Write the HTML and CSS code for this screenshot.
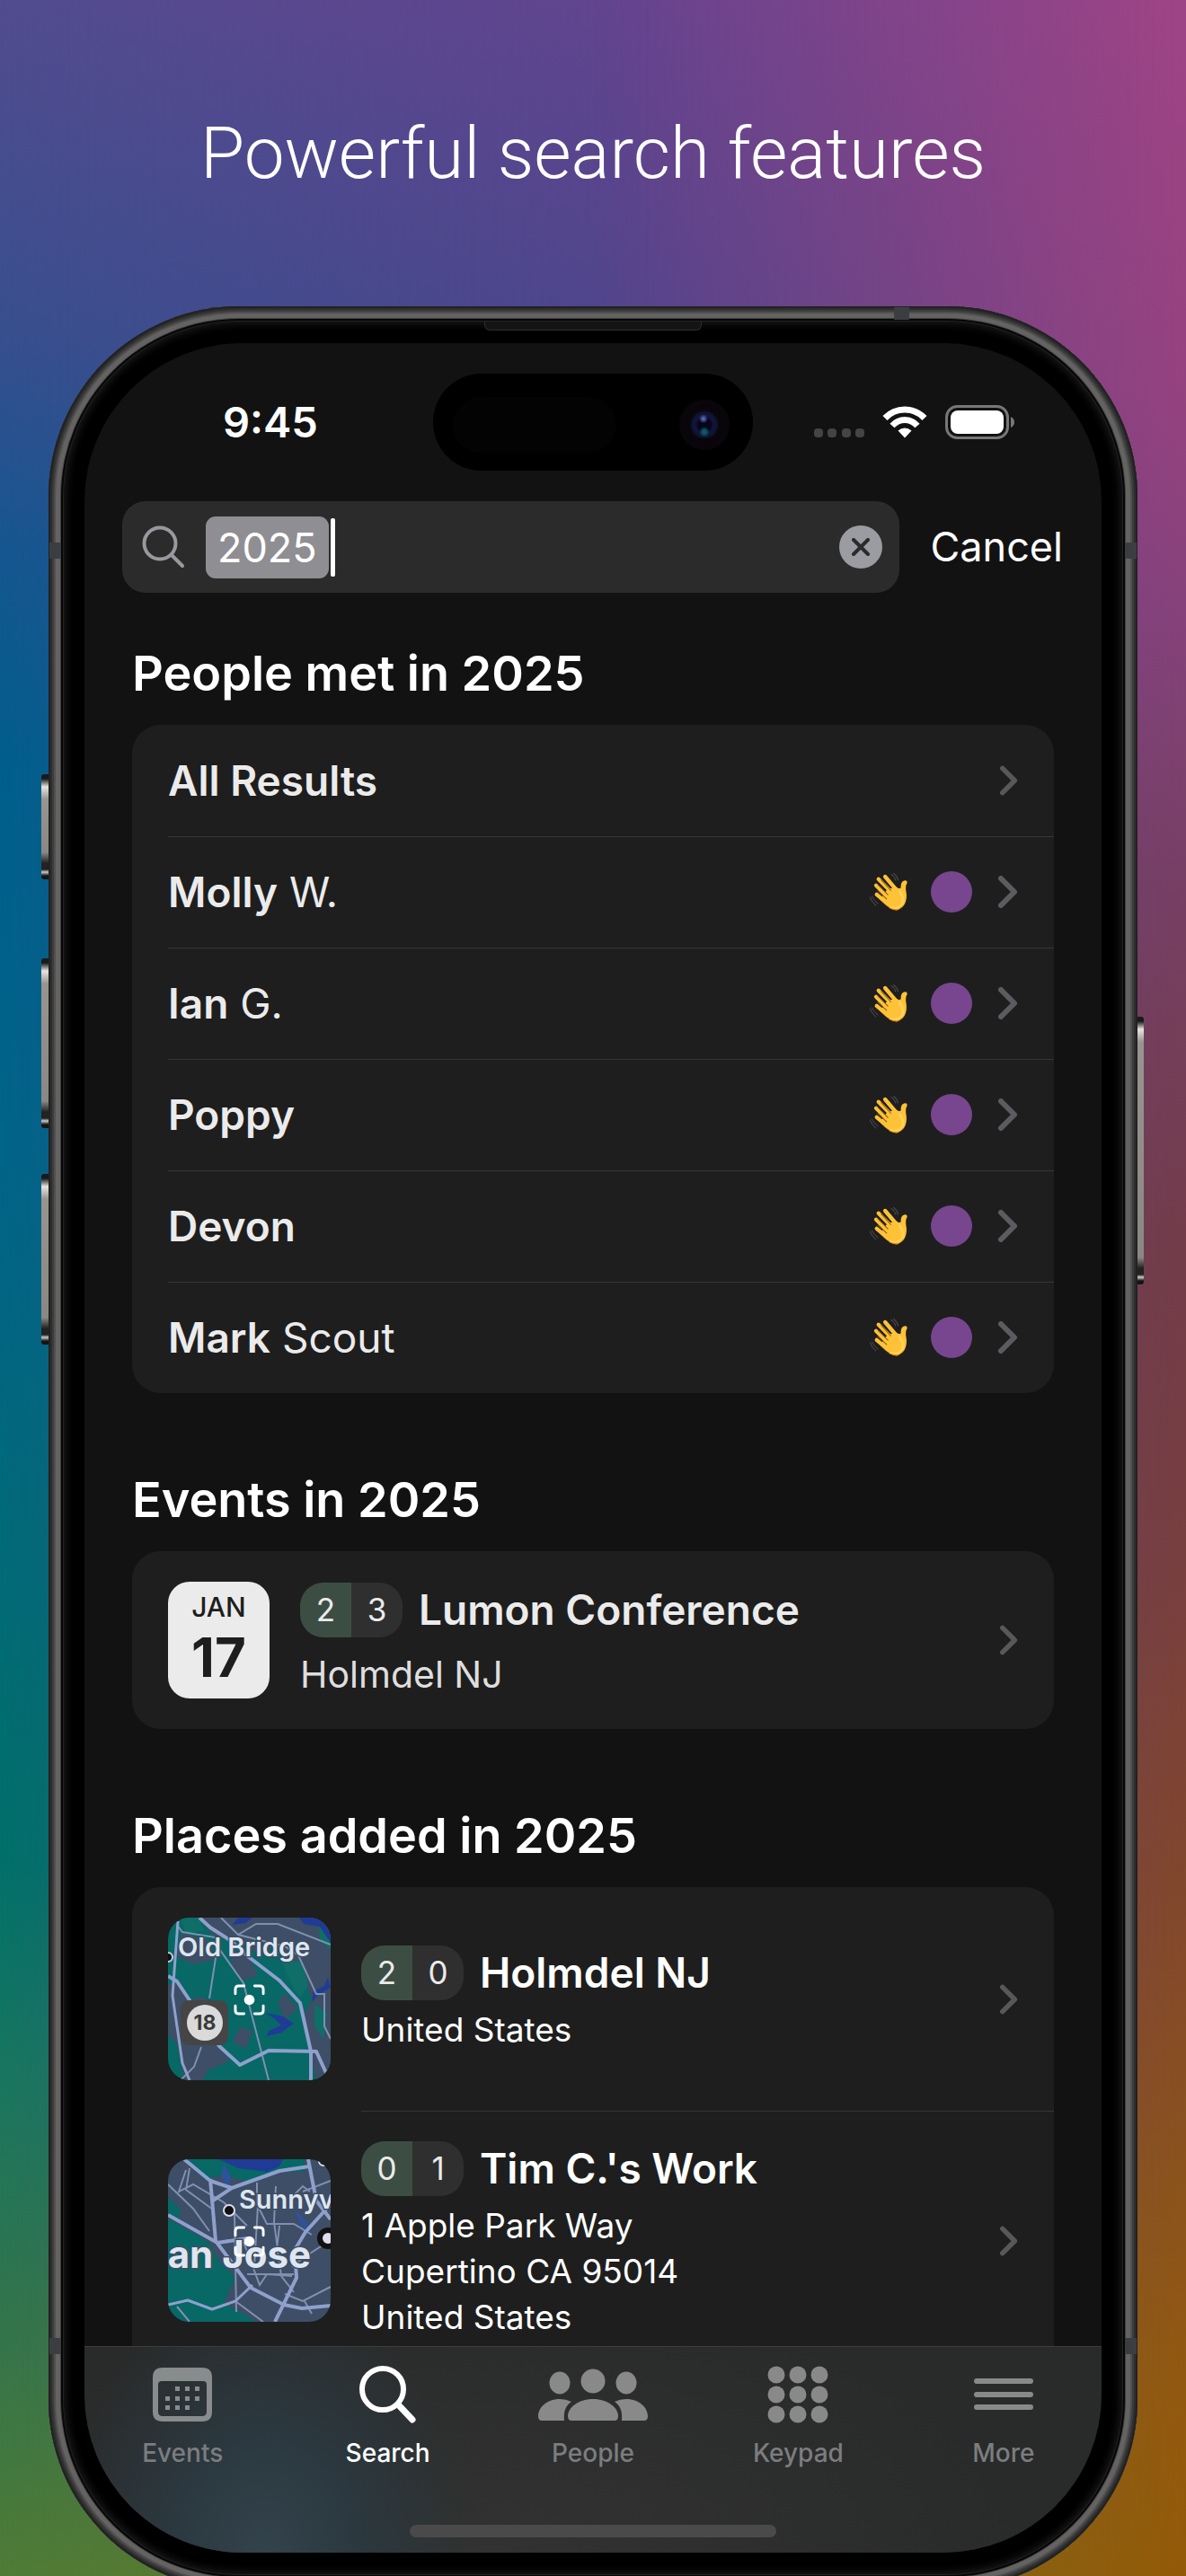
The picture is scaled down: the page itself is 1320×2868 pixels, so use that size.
FILE: index.html
```html
<!DOCTYPE html>
<html lang="en">
<head>
<meta charset="utf-8">
<meta name="viewport" content="width=device-width, initial-scale=1">
<title>Powerful search features</title>
<link rel="stylesheet" href="styles.css">
</head>
<body>
<svg class="sprite" aria-hidden="true">
  <symbol id="chevron" viewBox="0 0 22 36"><path d="M3 3l15 15L3 33" fill="none" stroke="currentColor" stroke-width="6" stroke-linecap="round" stroke-linejoin="round"/></symbol>
  <symbol id="wave" viewBox="0 0 125 125">
    <g fill="none" stroke="#4c4c4e" stroke-width="3" stroke-linecap="round">
      <path d="M71 4q12 8 15 20M79 1q12 9 15 23M1 80q6 16 19 27M7 77q6 13 20 24"/>
    </g>
    <path d="M58 54L88 46Q98 54 103 48Q102 28 114 25Q125 23 124 32Q118 42 120 58Q126 88 113 107Q95 130 68 116Q50 105 34 88Z" fill="#fdc237"/>
    <g fill="none" stroke="#fdc237" stroke-width="13" stroke-linecap="round">
      <path d="M51 12L90 58M29 20L78 70M21 41L68 88M23 71L62 104"/>
    </g>
    <path d="M100 62q18 26 4 46q-12 14-34 6" fill="none" stroke="#ffd765" stroke-width="9" stroke-linecap="round" opacity=".7"/>
    <g fill="none" stroke="#8a5a10" stroke-width="3" stroke-linecap="round"><path d="M38 23L70 58M26 38L60 72M27 59L56 86"/></g>
    <path d="M38 92Q66 122 92 120Q112 112 119 90Q110 117 90 124Q64 122 38 92Z" fill="#e08a10"/>
  </symbol>
  <symbol id="focus" viewBox="0 0 36 36">
    <path d="M2 11V6q0-4 4-4h6M24 2h6q4 0 4 4v5M34 25v5q0 4-4 4h-6M12 34H6q-4 0-4-4v-5" fill="none" stroke="#fff" stroke-width="3" stroke-linecap="round"/>
    <circle cx="18" cy="18" r="6" fill="#fff"/>
  </symbol>
</svg>

<main class="page">
  <h1 class="headline">Powerful search features</h1>

  <div class="phone">
    <span class="side-button action"></span>
    <span class="side-button volume-up"></span>
    <span class="side-button volume-down"></span>
    <span class="side-button power"></span>
    <span class="band band-top"></span>
    <span class="band band-left"></span>
    <span class="band band-right"></span>
    <span class="band band-left low"></span>
    <span class="band band-right low"></span>
    <span class="earpiece"></span>

    <div class="screen">
      <header class="status">
        <time class="clock">9:45</time>
        <div class="island"><span class="sensor"></span><span class="lens"></span></div>
        <div class="indicators">
          <svg width="56" height="36" viewBox="0 0 56 36" fill="#444"><rect y="25" width="10" height="10" rx="4"/><rect x="15" y="25" width="10" height="10" rx="4"/><rect x="31" y="25" width="10" height="10" rx="4"/><rect x="46" y="25" width="10" height="10" rx="4"/></svg>
          <svg class="wifi" width="50" height="36" viewBox="0 0 50 36" fill="none" stroke="#fff" stroke-width="7"><path d="M3 13.500Q12 4 25 4T47 13.500"/><path d="M11 22Q17 15.500 25 15.500T39 22"/><path d="M25 35.500l-7.500-8Q21 24.500 25 24.500T32.500 27.500Z" fill="#fff" stroke="none"/></svg>
          <svg width="78" height="38" viewBox="0 0 78 38"><rect x="1.500" y="1.500" width="68" height="35" rx="12" fill="none" stroke="#77777a" stroke-width="3"/><rect x="6" y="6" width="59" height="26" rx="8" fill="#fff"/><path d="M73 13q4 2 4 6t-4 6z" fill="#77777a"/></svg>
        </div>
      </header>

      <form class="search-row" role="search" onsubmit="return false">
        <div class="search-box">
          <svg class="glass" width="48" height="48" viewBox="0 0 48 48" fill="none" stroke="#98989f" stroke-width="4" stroke-linecap="round"><circle cx="20" cy="20" r="17.500"/><path d="M33 33l12 12"/></svg>
          <input class="query" type="text" aria-label="Search" value="2025">
          <span class="caret"></span>
          <button class="clear" type="reset" aria-label="Clear text">
            <svg width="20" height="20" viewBox="0 0 20 20" stroke="#2b2b2b" stroke-width="4" stroke-linecap="round"><path d="M2 2l16 16M18 2L2 18"/></svg>
          </button>
        </div>
        <button class="cancel" type="button">Cancel</button>
      </form>

      <section class="group first">
        <h2>People met in 2025</h2>
        <ul class="card people">
          <li><a class="person" href="#all"><strong>All Results</strong><svg class="chevron small"><use href="#chevron"/></svg></a></li>
          <li><a class="person" href="#molly"><span><strong>Molly</strong> W.</span><svg class="wave"><use href="#wave"/></svg><i class="dot"></i><svg class="chevron"><use href="#chevron"/></svg></a></li>
          <li><a class="person" href="#ian"><span><strong>Ian</strong> G.</span><svg class="wave"><use href="#wave"/></svg><i class="dot"></i><svg class="chevron"><use href="#chevron"/></svg></a></li>
          <li><a class="person" href="#poppy"><span><strong>Poppy</strong></span><svg class="wave"><use href="#wave"/></svg><i class="dot"></i><svg class="chevron"><use href="#chevron"/></svg></a></li>
          <li><a class="person" href="#devon"><span><strong>Devon</strong></span><svg class="wave"><use href="#wave"/></svg><i class="dot"></i><svg class="chevron"><use href="#chevron"/></svg></a></li>
          <li><a class="person" href="#mark"><span><strong>Mark</strong> Scout</span><svg class="wave"><use href="#wave"/></svg><i class="dot"></i><svg class="chevron"><use href="#chevron"/></svg></a></li>
        </ul>
      </section>

      <section class="group">
        <h2>Events in 2025</h2>
        <div class="card">
          <a class="entry event" href="#lumon">
            <time class="date" datetime="2025-01-17"><span class="month">JAN</span><span class="day">17</span></time>
            <div class="details">
              <h3><span class="counts"><b>2</b><b>3</b></span>Lumon Conference</h3>
              <p>Holmdel NJ</p>
            </div>
            <svg class="chevron small"><use href="#chevron"/></svg>
          </a>
        </div>
      </section>

      <section class="group places">
        <h2>Places added in 2025</h2>
        <ul class="card">
          <li><a class="entry" href="#holmdel">
            <svg class="map" viewBox="0 0 181 181">
              <rect width="181" height="181" fill="#076866"/>
              <g fill="#3d4e66">
                <path d="M35 0H181V181H165L150 110L160 92L150 60L138 42L120 32L100 40L75 24L50 20L40 8Z"/>
                <path d="M0 75L12 72L22 92L40 88L55 108L45 130L62 148L68 160L45 170L38 181H18L10 140L0 130Z"/>
                <path d="M8 42l20 10l25-5l-8-22l-30-8zM72 40l18 4l10 20l-16 6l-14-14zM80 122l14 4l-8 20l-14-8zM130 84l14 18l-14 12l-8-20z"/>
              </g>
              <path d="M168 10l13 8v18l-12-10zM125 46l25 4l6 26l-10 14l-14-28zM163 96l14 10l-4 30l-10-16zM14 0h20l6 14l-20 4z" fill="#0f6e68"/>
              <g fill="#1f3b96">
                <path d="M78 0h16l-8 6l-14 2zM146 0h20l15 14v14l-12-18l-18-3zM178 66l3 12l-14 8l-7 8l2-12l12-6z"/>
                <path d="M108 106l20 4l12 8l-6 4l-8 6l-16 4l2-6l14-6l-8-8z"/>
              </g>
              <g fill="none" stroke="#7f90b0" stroke-width="2">
                <path d="M59 0L78 19L98 7H122L181 30M10 8L16 16L53 22V45L46 90M55 32L84 73L112 181M145 42L165 85H174V121L181 135M37 144L29 166L14 181M78 19L130 32L145 42"/>
              </g>
              <g fill="none" stroke="#8fa0cc" stroke-width="4" stroke-linejoin="round">
                <path d="M35 0L47 11L69 25L90 44L124 70L147 95L159 149V181"/>
                <path d="M0 65L10 71L24 92L57 143L80 164L112 148L165 149L176 173"/>
                <path d="M11 4L5 87L16 162L24 181" stroke-width="3"/>
              </g>
              <circle cx="0" cy="44" r="5" fill="#111" stroke="#ccd" stroke-width="2"/>
              <text class="town" x="11" y="43">Old Bridge</text>
              <rect x="14" y="92" width="53" height="50" rx="9" fill="#454545"/>
              <circle cx="41" cy="117" r="20" fill="#dadada"/>
              <text class="route" x="41" y="125">18</text>
              <use href="#focus" x="73" y="74" width="35" height="35"/>
            </svg>
            <div class="details">
              <h3><span class="counts"><b>2</b><b>0</b></span>Holmdel NJ</h3>
              <p>United States</p>
            </div>
            <svg class="chevron small"><use href="#chevron"/></svg>
          </a></li>
          <li><a class="entry" href="#tim">
            <svg class="map" viewBox="0 0 181 181">
              <rect width="181" height="181" fill="#3d4e66"/>
              <path d="M18 0H152V14L124 14L95 26L60 18L40 22ZM0 42L14 56L12 66L0 60ZM0 66L45 92L58 115L75 132L62 160L80 170L98 181H0Z" fill="#076866"/>
              <path d="M56 0h72l-4 8l-14 6l-14-2l-18-2l-8-4z" fill="#1f3b96"/>
              <path d="M62 4l8 16l-3 14l-8-16zM140 56l14 12l6 16l-12-10z" fill="#2f5298"/>
              <g fill="none" stroke="#7f90b0" stroke-width="2">
                <path d="M0 28L28 55L46 80M20 12L12 36L28 28L62 48L88 74M24 10L20 34L50 56M99 26V50L110 72H140L160 84M120 30L118 70L126 130L140 148M100 52L96 120M74 60L76 170M88 128H140M84 92L102 140L110 128L138 130M124 74L120 110M138 120L150 110L181 90M130 150L150 158L181 142M152 158L160 172M10 164L24 181M75 158L106 181M150 36L181 24M140 40L150 30L158 36"/>
              </g>
              <g fill="none" stroke="#8fa0cc" stroke-width="4" stroke-linejoin="round">
                <path d="M18 0L47 24L71 32L124 13L157 8M156 0L165 46L181 67M47 22L53 91L92 143L129 162L149 166L181 163"/>
                <path d="M0 62L55 93L88 88M181 50L153 81L141 101L143 132L119 181M71 32L50 46"/>
                <path d="M0 162L22 157L49 167L75 158L94 140" stroke-width="3"/>
              </g>
              <circle cx="68" cy="57" r="6" fill="#111" stroke="#dde" stroke-width="2"/>
              <circle cx="178" cy="88" r="9" fill="#dde" stroke="#111" stroke-width="6"/>
              <circle cx="173" cy="2" r="5" fill="#111" stroke="#dde" stroke-width="2"/>
              <text class="town" x="79" y="55">Sunnyv</text>
              <text class="city" x="159" y="121">an Jose</text>
              <use href="#focus" x="73" y="74" width="35" height="35"/>
            </svg>
            <div class="details">
              <h3><span class="counts"><b>0</b><b>1</b></span>Tim C.'s Work</h3>
              <p>1 Apple Park Way<br>Cupertino CA 95014<br>United States</p>
            </div>
            <svg class="chevron small"><use href="#chevron"/></svg>
          </a></li>
        </ul>
      </section>

      <footer class="dock">
        <nav class="tabs">
          <a href="#events">
            <svg width="66" height="66" viewBox="0 0 66 66" fill="#898c8c"><path fill-rule="evenodd" d="M11 3h44q11 0 11 11v38q0 11-11 11H11Q0 63 0 52V14Q0 3 11 3zM10 18q-4 0-4 4v30q0 5 5 5h44q5 0 5-5V22q0-4-4-4z"/><path d="M25 24h5v5h-5zM36 24h5v5h-5zM47 24h5v5h-5zM14 35h5v5h-5zM25 35h5v5h-5zM36 35h5v5h-5zM47 35h5v5h-5zM14 45h5v5h-5zM25 45h5v5h-5zM36 45h5v5h-5z"/></svg>
            Events</a>
          <a class="current" href="#search" aria-current="page">
            <svg width="66" height="66" viewBox="0 0 66 66" fill="none" stroke="#fff" stroke-width="6"><circle cx="27" cy="27" r="23"/><path d="M44 44l16 17" stroke-width="7" stroke-linecap="round"/></svg>
            Search</a>
          <a href="#people">
            <svg width="122" height="66" viewBox="0 0 122 66" fill="#898989"><circle cx="61" cy="18" r="13.500"/><ellipse cx="24" cy="20" rx="11.500" ry="12.500"/><ellipse cx="98" cy="20" rx="11.500" ry="12.500"/><path d="M37 62q-4 0-4-5c0-9 11-19 28-19s28 10 28 19q0 5-4 5z"/><path d="M4 62q-4 0-4-5C0 48 9 38 24 38q7 0 13 3c-6 4-9 10-8 21zM118 62q4 0 4-5c0-9-9-19-24-19q-7 0-13 3c6 4 9 10 8 21z"/></svg>
            People</a>
          <a href="#keypad">
            <svg width="68" height="66" viewBox="0 0 68 66" fill="#898989"><circle cx="10" cy="11" r="9.500"/><circle cx="34" cy="11" r="9.500"/><circle cx="58" cy="11" r="9.500"/><circle cx="10" cy="33" r="9.500"/><circle cx="34" cy="33" r="9.500"/><circle cx="58" cy="33" r="9.500"/><circle cx="10" cy="55" r="9.500"/><circle cx="34" cy="55" r="9.500"/><circle cx="58" cy="55" r="9.500"/></svg>
            Keypad</a>
          <a href="#more">
            <svg width="66" height="66" viewBox="0 0 66 66" fill="#898989"><rect y="15" width="66" height="6" rx="3"/><rect y="30" width="66" height="6" rx="3"/><rect y="44" width="66" height="6" rx="3"/></svg>
            More</a>
        </nav>
        <div class="home-indicator"></div>
      </footer>
    </div>
  </div>
</main>
</body>
</html>
```
FILE: styles.css
```css
* { box-sizing: border-box; }

body {
  margin: 0;
  font-family: Inter, "Liberation Sans", sans-serif;
  color: #ebebeb;
  background: #111;
}

h1, h2, h3, p, ul { margin: 0; padding: 0; }
ul { list-style: none; }
a { color: inherit; text-decoration: none; }
svg { display: block; flex: none; }
button, input { font: inherit; color: inherit; border: 0; background: none; padding: 0; margin: 0; }

.sprite { display: none; }

/* Backdrop: three vertical colour ramps blended from left to right */
.page {
  position: relative;
  z-index: 0;
  min-height: 100vh;
  overflow: hidden;
  background: linear-gradient(#524c90 0%, #384f8e 13%, #165690 21%, #005f8c 30%, #006488 45%, #00697a 58%, #00706a 72%, #177660 80%, #35754a 91%, #4f7c36 100%);
}
.page::before, .page::after { content: ""; position: absolute; inset: 0; z-index: -1; }
.page::before {
  background: linear-gradient(#63448f, #50458c 13%, #50458c 80%, #6e7426 100%);
  mask-image: linear-gradient(90deg, transparent, #000 55%);
}
.page::after {
  background: linear-gradient(#9e4486 0%, #96427f 15%, #86427a 24%, #763f62 35%, #743c48 49%, #783f3e 61%, #82472c 73%, #8c521c 84%, #93590e 94%, #935a08 100%);
  mask-image: linear-gradient(90deg, transparent 50%, #000 100%);
}

.headline {
  padding: 121px 0 120px;
  font-family: Roboto, "Liberation Sans", sans-serif;
  font-size: 80px;
  line-height: 100px;
  font-weight: 300;
  text-align: center;
  color: #fff;
}

/* Handset */
.phone {
  position: relative;
  margin: 0 54px -15px;
  padding: 41px 40px;
  border-radius: 212px;
  background: #000;
  box-shadow:
    inset 0 0 0 2px #222,
    inset 0 0 0 4px #2e2e2e,
    inset 0 0 0 6px #3c3c3c,
    inset 0 0 0 8px #505050,
    inset 0 0 0 13px #646362,
    inset 0 0 0 14px #404040,
    inset 0 0 0 16px #060606,
    inset 0 0 0 17px #222,
    inset 0 0 8px 20px #181818;
}
.side-button {
  position: absolute;
  left: -8px;
  width: 8px;
  border-radius: 3px 0 0 3px;
  background: linear-gradient(#1a1a1a 0 5px, #e8e4e0 14px, #98948f 28px, #8a8884 calc(100% - 30px), #222 calc(100% - 18px), #222 calc(100% - 11px), #ccc calc(100% - 8px), #151515 calc(100% - 4px));
}
.action { top: 521px; height: 117px; }
.volume-up { top: 726px; height: 189px; }
.volume-down { top: 966px; height: 190px; }
.power { top: 791px; left: auto; right: -7px; width: 7px; height: 298px; border-radius: 0 3px 3px 0; }
.band { position: absolute; width: 13px; height: 18px; background: #3b3e41; }
.band-top { top: 1px; right: 254px; width: 17px; height: 14px; }
.band-left { top: 263px; left: 1px; }
.band-right { top: 263px; right: 1px; }
.band.low { top: auto; bottom: 262px; }
.earpiece {
  position: absolute;
  top: 17px;
  left: 50%;
  width: 242px;
  height: 10px;
  transform: translateX(-50%);
  border: solid #2c2c2c;
  border-width: 0 1px 1px;
  border-radius: 0 0 6px 6px;
  background: #141414;
}

.screen {
  position: relative;
  overflow: hidden;
  border-radius: 176px;
  background: #121212;
}

/* Status bar */
.status {
  display: grid;
  grid-template-columns: 1fr 356px 1fr;
  align-items: center;
  padding: 34px 0;
}
.clock { padding-left: 154px; font-size: 47px; line-height: 56px; font-weight: 600; color: #fff; }
.island {
  display: flex;
  align-items: center;
  justify-content: space-between;
  height: 108px;
  padding: 6px 26px 0 22px;
  border-radius: 54px;
  background: #000;
}
.sensor { width: 182px; height: 62px; border-radius: 31px; background: #030303; }
.lens {
  width: 56px;
  height: 56px;
  border-radius: 50%;
  background:
    radial-gradient(circle at 48% 38%, #5565b8 0 1px, transparent 5px),
    radial-gradient(circle at 50% 64%, #0d5a62 0 2px, transparent 6px),
    radial-gradient(circle, #05051c 0 7px, #12143c 10px, #101230 14px, #07060a 16px, #0a050a 27px);
}
.indicators { display: flex; align-items: center; justify-content: flex-end; gap: 20px; padding-right: 96px; }

/* Search field */
.search-row { display: flex; align-items: center; gap: 34px; padding: 0 43px 0 42px; }
.search-box {
  display: flex;
  flex: 1;
  align-items: center;
  min-width: 0;
  height: 102px;
  padding: 0 19px 0 22px;
  border-radius: 26px;
  background: #2b2b2b;
}
.query {
  field-sizing: content;
  height: 69px;
  margin-left: 23px;
  padding: 0 13px;
  border-radius: 11px;
  background: #8f8e93;
  color: #fff;
  font-size: 45px;
}
.caret { width: 5px; height: 65px; margin-left: 2px; border-radius: 2px; background: #fff; }
.clear {
  display: grid;
  place-items: center;
  width: 48px;
  height: 48px;
  margin-left: auto;
  border-radius: 50%;
  background: #9b9ba2;
}
.cancel { font-size: 45px; line-height: 56px; color: #fff; }

/* Result groups */
.group { padding: 87px 53px 0; }
.group.first { padding-top: 58px; }
.group h2 { padding-bottom: 25px; font-size: 54px; line-height: 64px; font-weight: 600; color: #fff; }
.card { border-radius: 32px; background: #1e1e1e; }
.places .card { border-radius: 32px 32px 0 0; }

.person {
  position: relative;
  display: flex;
  align-items: center;
  height: 124px;
  padding: 0 40px;
  font-size: 46px;
}
.person > :first-child { margin-right: auto; }
.person strong { font-weight: 600; }
li + li .person::before, li + li .entry::before {
  content: "";
  position: absolute;
  top: 0;
  right: 0;
  left: 40px;
  height: 1px;
  background: #363638;
}
.wave { width: 42px; height: 42px; }
.dot { width: 46px; height: 46px; margin: 0 29px 0 26px; border-radius: 50%; background: #77468f; }
.chevron { width: 22px; height: 36px; color: #5c5b60; }
.chevron.small { width: 20px; height: 34px; color: #585858; }

.entry {
  position: relative;
  display: flex;
  align-items: center;
  gap: 34px;
  padding: 34px 40px;
}
li + li .entry { padding-bottom: 7px; }
li + li .entry::before { left: 255px; }
.details { display: flex; flex: 1; flex-direction: column; gap: 7px; }
.event .details { gap: 16px; }
.details h3 { display: flex; align-items: center; gap: 18px; font-size: 46px; line-height: 61px; font-weight: 600; }
.details p { font-size: 37px; line-height: 51px; }
.event .details p { font-size: 41px; color: #dedede; }
.places .entry { color: #fff; }

.counts {
  display: flex;
  overflow: hidden;
  width: 114px;
  height: 61px;
  border-radius: 26px;
  background: linear-gradient(90deg, #3c4e44 50%, #2f2f2f 50%);
}
.counts b { flex: 1; font-size: 35px; font-weight: 400; text-align: center; color: #ebebeb; }

.date {
  display: flex;
  flex-direction: column;
  align-items: center;
  width: 113px;
  height: 130px;
  padding-top: 10px;
  border-radius: 24px;
  background: #ebebeb;
  color: #1e1e1e;
}
.month { font-size: 30px; line-height: 36px; font-weight: 500; }
.day { font-size: 60px; line-height: 76px; font-weight: 700; }

.map { width: 181px; height: 181px; border-radius: 24px; overflow: hidden; }
.map text { fill: #dfe6ef; paint-order: stroke; stroke: #3d4e66; stroke-width: 3px; }
.town { font-size: 29px; font-weight: 600; }
.city { font-size: 42px; font-weight: 700; text-anchor: end; }
.map .route { fill: #3a3a3a; stroke: none; font-size: 23px; font-weight: 700; text-anchor: middle; }

/* Tab bar */
.dock {
  height: 230px;
  border-top: 1px solid #3c3e3e;
  background:
    radial-gradient(ellipse 230px 300px at 200px 100%, #33434c, #2b383f 45%, transparent),
    radial-gradient(ellipse 600px 300px at 450px 100%, #313231, transparent),
    #292a2a;
}
.tabs { display: grid; grid-template-columns: repeat(5, 1fr); margin: 0 -5px; padding-top: 20px; }
.tabs a {
  display: flex;
  flex-direction: column;
  align-items: center;
  gap: 15px;
  font-size: 28px;
  line-height: 34px;
  font-weight: 500;
  color: #7b7d7e;
}
.tabs .current { color: #fff; }
.home-indicator { width: 408px; height: 14px; margin: 63px auto 0; border-radius: 7px; background: #4a4a4a; }
```
